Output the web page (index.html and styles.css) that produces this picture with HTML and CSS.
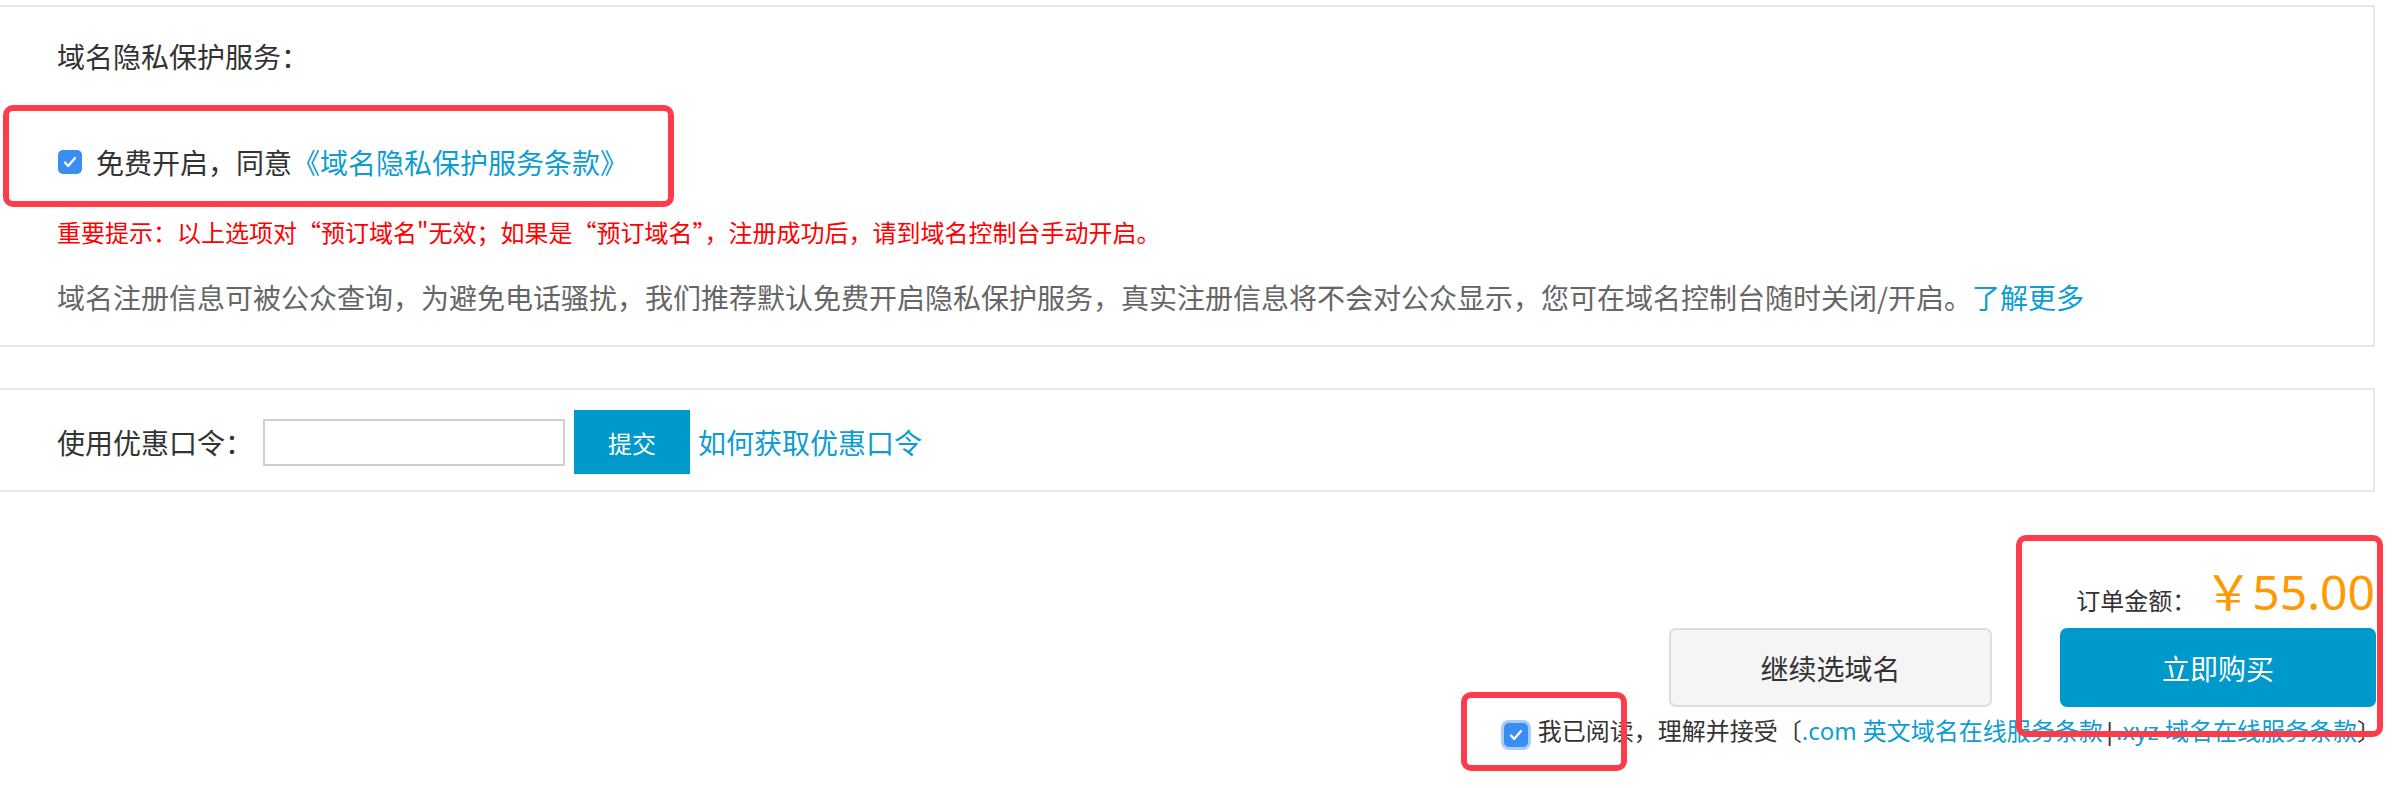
FILE: index.html
```html
<!DOCTYPE html>
<html lang="zh-CN">
<head>
<meta charset="utf-8">
<title>域名隐私保护服务</title>
<link rel="stylesheet" href="styles.css">
</head>
<body>
<div class="page">
  <section class="box privacy">
    <div class="title">域名隐私保护服务：</div>
    <div class="agree-row">
      <span class="cb"><svg viewBox="0 0 24 24" width="24" height="24"><path d="M7 12.5l3.2 3.5L17 8" fill="none" stroke="#fff" stroke-width="2.2" stroke-linecap="round" stroke-linejoin="round"/></svg></span>
      <span>免费开启，同意<a class="link" href="#">《域名隐私保护服务条款》</a></span>
    </div>
    <p class="warn">重要提示：以上选项对“预订域名"无效；如果是“预订域名”，注册成功后，请到域名控制台手动开启。</p>
    <p class="desc">域名注册信息可被公众查询，为避免电话骚扰，我们推荐默认免费开启隐私保护服务，真实注册信息将不会对公众显示，您可在域名控制台随时关闭/开启。<a class="link" href="#">了解更多</a></p>
  </section>

  <section class="box coupon">
    <span class="coupon-label">使用优惠口令：</span>
    <input class="coupon-input" type="text">
    <button class="submit" type="button">提交</button>
    <a class="link coupon-help" href="#">如何获取优惠口令</a>
  </section>

  <div class="checkout">
    <div class="total"><span class="total-label">订单金额：</span><span class="price">￥55.00</span></div>
    <div class="actions">
      <button class="btn btn-ghost" type="button">继续选域名</button>
      <button class="btn btn-buy" type="button">立即购买</button>
    </div>
    <div class="terms">
      <span class="cb cb-focus"><svg viewBox="0 0 24 24" width="24" height="24"><path d="M7 12.5l3.2 3.5L17 8" fill="none" stroke="#fff" stroke-width="2.2" stroke-linecap="round" stroke-linejoin="round"/></svg></span>
      <span>我已阅读，理解并接受〔<a class="link" href="#">.com 英文域名在线服务条款</a>|<a class="link" href="#">.xyz 域名在线服务条款</a>〕</span>
    </div>
  </div>

  <div class="mark mark-privacy"></div>
  <div class="mark mark-total"></div>
  <div class="mark mark-terms"></div>
</div>
</body>
</html>
```

FILE: styles.css
```css
html, body {
  margin: 0;
  padding: 0;
  background: #fff;
}

body {
  font-family: "Noto Sans CJK SC", "Noto Sans", sans-serif;
  color: #333;
}

.page {
  position: relative;
  width: 2375px;
  height: 788px;
}

.box {
  border: 2px solid #e8e8e8;
  border-left: none;
  background: #fff;
}

.link {
  color: #0d9dd2;
  text-decoration: none;
}

/* privacy section */
.privacy {
  margin-top: 5px;
  padding: 29px 0 28px 57px;
}

.title {
  font-size: 28px;
  line-height: 40px;
  color: #333;
}

.agree-row {
  margin-top: 66px;
  display: flex;
  align-items: center;
  font-size: 28px;
  line-height: 40px;
  color: #333;
}

.cb {
  display: inline-flex;
  width: 24px;
  height: 24px;
  border-radius: 5px;
  background: #3a8ef2;
  flex: none;
}

.agree-row .cb {
  margin-left: 1px;
  margin-right: 14px;
}

.warn {
  margin: 32px 0 0;
  font-size: 24px;
  line-height: 36px;
  color: #f00;
}

.desc {
  margin: 27px 0 0;
  font-size: 28px;
  line-height: 40px;
  color: #666;
}

/* coupon section */
.coupon {
  margin-top: 41px;
  padding: 20px 0 16px 57px;
  display: flex;
  align-items: center;
  height: 64px;
}

.coupon-label {
  font-size: 28px;
  line-height: 40px;
  color: #333;
}

.coupon-input {
  box-sizing: border-box;
  width: 302px;
  height: 47px;
  margin: 0 0 0 10px;
  border: 2px solid #cfcfcf;
  padding: 0 8px;
  font-size: 24px;
  outline: none;
}

.submit {
  box-sizing: border-box;
  width: 116px;
  height: 64px;
  margin-left: 9px;
  border: none;
  background: #0099cc;
  color: #fff;
  font-family: inherit;
  font-size: 24px;
}

.coupon-help {
  margin-left: 8px;
  font-size: 28px;
  line-height: 40px;
}

/* checkout */
.checkout {
  display: flex;
  flex-direction: column;
  align-items: flex-end;
}

.total {
  margin-top: 68px;
  height: 64px;
  line-height: 64px;
  white-space: nowrap;
}

.total-label {
  font-size: 24px;
  color: #333;
}

.price {
  margin-left: 8px;
  font-family: "Noto Sans", "Noto Sans CJK SC", sans-serif;
  font-size: 48px;
  color: #ff9900;
}

.actions {
  margin-top: 4px;
  display: flex;
  gap: 68px;
  margin-right: -1px;
}

.btn {
  box-sizing: border-box;
  height: 79px;
  border-radius: 7px;
  font-family: inherit;
  font-size: 28px;
}

.btn-ghost {
  width: 323px;
  background: #f5f5f5;
  border: 2px solid #dddddd;
  color: #333;
}

.btn-buy {
  width: 316px;
  background: #0099cc;
  border: none;
  color: #fff;
}

.terms {
  margin-top: 8px;
  margin-right: -6px;
  display: flex;
  align-items: center;
  font-family: "Noto Sans", "Noto Sans CJK SC", sans-serif;
  font-size: 24px;
  line-height: 30px;
  color: #333;
  white-space: nowrap;
}

.terms .cb {
  margin-right: 10px;
  margin-top: 8px;
}

.cb-focus {
  box-shadow: 0 0 0 3px #a8cdfb;
}

/* annotation highlight marks */
.mark {
  position: absolute;
  box-sizing: border-box;
  border: 6px solid #fc3b4b;
  border-radius: 10px;
}

.mark-privacy {
  left: 3px;
  top: 100px;
  width: 671px;
  height: 102px;
}

.mark-total {
  left: 2016px;
  top: 530px;
  width: 367px;
  height: 202px;
}

.mark-terms {
  left: 1461px;
  top: 687px;
  width: 166px;
  height: 79px;
}
```
